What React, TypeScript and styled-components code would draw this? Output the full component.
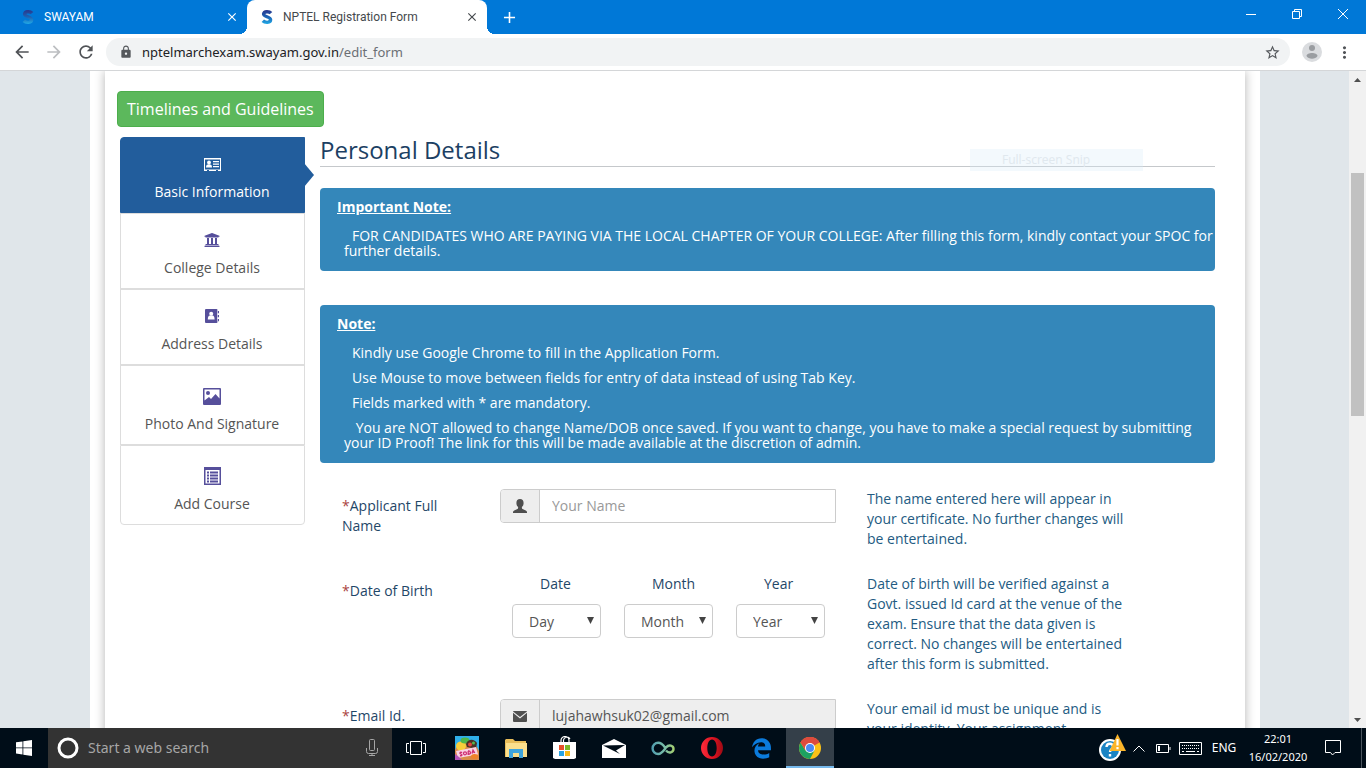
import React from "react";
import styled, { createGlobalStyle } from "styled-components";
import {
  MdArrowBack,
  MdArrowForward,
  MdRefresh,
  MdLock,
  MdStarBorder,
  MdMoreVert,
  MdClose,
  MdAdd,
} from "react-icons/md";
import { FaUniversity, FaEdgeLegacy } from "react-icons/fa";

const GlobalStyle = createGlobalStyle`
  * { box-sizing: border-box; }
  body {
    margin: 0;
    font-family: "Open Sans", "Noto Sans", sans-serif;
    font-size: 14px;
    line-height: 20px;
    color: #1f4768;
  }
  button, input, select { font: inherit; }
  button { border: 0; padding: 0; background: none; cursor: pointer; }
  svg { display: block; flex: none; }
`;

const Desktop = styled.div`
  display: flex;
  flex-direction: column;
  height: 100vh;
  overflow: hidden;
`;

/* ---------- browser ---------- */

const TabStrip = styled.div`
  display: flex;
  flex: none;
  height: 34px;
  background: #0078d7;
  color: #fff;
`;

const Tab = styled.div<{ $active?: boolean }>`
  position: relative;
  display: flex;
  align-items: center;
  gap: 8px;
  width: ${(p) => (p.$active ? 240 : 247)}px;
  padding: 0 8px 0 ${(p) => (p.$active ? 12 : 20)}px;
  background: ${(p) => (p.$active ? "#fff" : "transparent")};
  color: ${(p) => (p.$active ? "#45494d" : "#fff")};
  border-radius: 8px 8px 0 0;
  font-family: Roboto, sans-serif;
  font-size: 12px;

  &::before,
  &::after {
    content: ${(p) => (p.$active ? '""' : "none")};
    position: absolute;
    bottom: 0;
    width: 8px;
    height: 8px;
  }
  &::before {
    right: 100%;
    background: radial-gradient(circle at 0 0, #0078d7 8px, #fff 8px);
  }
  &::after {
    left: 100%;
    background: radial-gradient(circle at 100% 0, #0078d7 8px, #fff 8px);
  }
`;

const TabTitle = styled.span`
  flex: 1;
  white-space: nowrap;
`;

const TabButton = styled.button`
  display: grid;
  place-items: center;
  width: 14px;
  color: inherit;
`;

const NewTab = styled.button`
  display: grid;
  place-items: center;
  width: 44px;
  color: #fff;
`;

const WindowControls = styled.div`
  display: flex;
  height: 28px;
  margin-left: auto;
`;

const WindowButton = styled.button`
  display: grid;
  place-items: center;
  width: 46px;
  color: #fff;
`;

const Toolbar = styled.div`
  display: flex;
  flex: none;
  align-items: center;
  height: 37px;
  padding: 0 6px;
  background: #fff;
  border-bottom: 1px solid #d4d6d8;
  color: #55585c;
`;

const ToolButton = styled.button<{ $dim?: boolean }>`
  display: grid;
  place-items: center;
  width: 32px;
  height: 28px;
  color: ${(p) => (p.$dim ? "#bcbec1" : "#505357")};
`;

const AddressBar = styled.div`
  display: flex;
  flex: 1;
  align-items: center;
  height: 28px;
  margin: 0 12px 0 4px;
  padding: 0 9px 0 13px;
  gap: 9px;
  border-radius: 14px;
  background: #f1f3f4;
`;

const Url = styled.div`
  flex: 1;
  font-family: "Noto Sans", sans-serif;
  font-size: 13px;
  color: #202124;

  span {
    color: #6b6f74;
  }
`;

const Avatar = styled.button`
  margin-right: 6px;
`;

/* ---------- page ---------- */

const Viewport = styled.div`
  display: flex;
  flex: 1;
  min-height: 0;
  background: #e0e6ea;
`;

const Scroller = styled.div`
  flex: 1;
  min-width: 0;
  padding-left: 1px;
  overflow: hidden;
`;

const Container = styled.div`
  max-width: 1170px;
  margin: 0 auto;
  padding: 0 15px;
  background: #fff;
  overflow: hidden;
`;

const Sheet = styled.main`
  position: relative;
  padding: 20px 30px 40px 15px;
  background: #fff;
  box-shadow: 0 0 10px rgba(0, 0, 0, 0.3);
`;

const GuidelinesButton = styled.button`
  height: 36px;
  margin: 0 0 10px -3px;
  padding: 0 9px;
  border: 1px solid #4cae4c;
  border-radius: 4px;
  background: #5cb85c;
  color: #fff;
  font-size: 16px;
`;

const Columns = styled.div`
  display: flex;
  align-items: flex-start;
  gap: 15px;
`;

const Steps = styled.nav`
  flex: none;
  width: 185px;
`;

const Step = styled.a<{ $active?: boolean; $tall?: boolean }>`
  position: relative;
  display: flex;
  flex-direction: column;
  align-items: center;
  gap: 9px;
  height: ${(p) => (p.$tall ? 80 : 76)}px;
  padding: 0 1px 10px 0;
  justify-content: flex-end;
  border: 1px solid ${(p) => (p.$active ? "#225d9c" : "#ddd")};
  background: ${(p) => (p.$active ? "#225d9c" : "#fff")};
  color: ${(p) => (p.$active ? "#fff" : "#555")};
  text-decoration: none;

  &:first-child {
    border-radius: 4px 0 0 0;
  }
  &:last-child {
    border-radius: 0 0 4px 4px;
  }
  &::after {
    content: ${(p) => (p.$active ? '""' : "none")};
    position: absolute;
    left: 100%;
    top: 25px;
    border: solid transparent;
    border-width: 12px 0 12px 10px;
    border-left-color: #225d9c;
  }
`;

const StepIcon = styled.span<{ $active?: boolean }>`
  display: grid;
  place-items: center;
  height: 18px;
  color: ${(p) => (p.$active ? "#fff" : "#564f9b")};
`;

const Main = styled.section`
  flex: 1;
  min-width: 0;
`;

const Heading = styled.h1`
  margin: 0 0 21px;
  padding-bottom: 4px;
  border-bottom: 1px solid #c5c8cb;
  color: #1c3f63;
  font-size: 24px;
  line-height: 25px;
  font-weight: 400;
`;

const Note = styled.div`
  margin-bottom: 34px;
  padding: 11px 0 13px 17px;
  border-radius: 4px;
  background: #3487ba;
  color: #fff;
  line-height: 15px;
`;

const NoteTitle = styled.h2`
  margin: 0 0 13px;
  font-size: 14px;
  line-height: 16px;
  font-weight: 700;
  text-decoration: underline;
`;

const NoteLine = styled.p`
  margin: 0 0 10px 7px;
  text-indent: 8px;

  &:last-child {
    margin-bottom: 0;
  }
`;

const Form = styled.form`
  display: flex;
  flex-direction: column;
  gap: 25px;
  margin-top: -8px;
  padding-left: 22px;
`;

const Row = styled.div`
  display: grid;
  grid-template-columns: 158fr 336fr 379fr;
`;

const rowLabel = `
  padding: 7px 50px 0 0;
`;

const Label = styled.label`
  ${rowLabel}
`;

const GroupLabel = styled.span`
  ${rowLabel}
`;

const Star = styled.span`
  color: #a94442;
`;

const Help = styled.p`
  margin: 0;
  padding: 0 88px 0 31px;
  color: #235b82;
`;

const InputGroup = styled.div`
  display: flex;
  height: 34px;
  border: 1px solid #ccc;
  border-radius: 4px 0 0 4px;
  overflow: hidden;
`;

const Addon = styled.span`
  display: grid;
  place-items: center;
  width: 39px;
  border-right: 1px solid #ccc;
  background: #eee;
  color: #4f4f4f;
`;

const TextInput = styled.input`
  flex: 1;
  min-width: 0;
  padding: 0 12px;
  border: 0;
  border-radius: 0;
  background: #fff;
  color: #555;

  &::placeholder {
    color: #999;
    opacity: 1;
  }
  &:read-only {
    background: #eee;
  }
`;

const DateFields = styled.div`
  display: grid;
  grid-template-columns: repeat(3, 1fr);
`;

const DateField = styled.div`
  display: flex;
  flex-direction: column;
  gap: 10px;
  padding: 0 11px 0 12px;

  label {
    padding-left: 28px;
  }
`;

const SelectBox = styled.div`
  display: grid;
  align-items: center;

  > * {
    grid-area: 1 / 1;
  }
  svg {
    justify-self: end;
    margin: 0 7px 2px 0;
    pointer-events: none;
  }
`;

const Select = styled.select`
  width: 100%;
  height: 34px;
  padding: 1px 0 0 16px;
  border: 1px solid #ccc;
  border-radius: 4px;
  background: #fff;
  color: #555;
  appearance: none;
`;

const SnipGhost = styled.div`
  position: absolute;
  top: 78px;
  right: 102px;
  width: 173px;
  height: 22px;
  padding-left: 32px;
  background: rgba(214, 236, 250, 0.3);
  color: #e0e8ee;
  font-size: 12px;
  line-height: 22px;
`;

const ScrollBar = styled.div`
  display: flex;
  flex: none;
  flex-direction: column;
  align-items: center;
  width: 17px;
  background: #f1f1f1;
  color: #505050;
`;

const ScrollArrow = styled.button`
  display: grid;
  place-items: center;
  width: 17px;
  height: 17px;
`;

const ScrollSpace = styled.div<{ $grow: number }>`
  flex: ${(p) => p.$grow} 0 0;
`;

const ScrollThumb = styled(ScrollSpace)`
  width: 13px;
  background: #c1c1c1;
`;

/* ---------- taskbar ---------- */

const TaskBar = styled.footer`
  display: flex;
  flex: none;
  height: 40px;
  background: #000d18;
  color: #fff;
  font-family: "Noto Sans", sans-serif;
`;

const TaskButton = styled.button<{ $active?: boolean }>`
  display: grid;
  place-items: center;
  width: 48px;
  color: #fff;
  background: ${(p) => (p.$active ? "#343f49" : "transparent")};
  box-shadow: ${(p) => (p.$active ? "inset 0 -2px #76b9ed" : "none")};
`;

const Search = styled.label`
  display: flex;
  align-items: center;
  gap: 9px;
  width: 344px;
  padding: 0 14px 0 9px;
  background: #333;

  input {
    flex: 1;
    min-width: 0;
    padding: 0;
    border: 0;
    background: none;
    color: #fff;
    font-size: 14px;
  }
  input::placeholder {
    color: #a6a6a6;
    opacity: 1;
  }
`;

const Apps = styled.div`
  display: flex;
  gap: 1px;
  margin-left: 3px;
`;

const Tray = styled.div`
  display: flex;
  align-items: center;
  margin-left: auto;
  font-size: 12px;
`;

const TrayItem = styled.button<{ $width: number }>`
  display: grid;
  place-items: center;
  width: ${(p) => p.$width}px;
  height: 40px;
  color: #fff;
  line-height: 18px;
  text-align: center;
`;

const Clock = styled(TrayItem)`
  font-size: 11px;
`;

const ShowDesktop = styled.button`
  width: 5px;
  height: 40px;
  border-left: 1px solid #4a545d;
`;

/* ---------- drawings ---------- */

const SwayamLogo = ({ id }: { id: string }) => (
  <svg width="16" height="16" viewBox="0 0 16 16" fill="none">
    <defs>
      <linearGradient id={id} x1="0" y1="0" x2="0" y2="16" gradientUnits="userSpaceOnUse">
        <stop offset="0" stopColor="#2b2f86" />
        <stop offset="0.5" stopColor="#1c63b4" />
        <stop offset="1" stopColor="#22b4ee" />
      </linearGradient>
    </defs>
    <path
      d="M12 4.200C10.500 2.400 5 1.800 4.600 5c-.3 3 7 2.500 7 5.800 0 3.200-5.600 3.200-7.800 1"
      stroke={`url(#${id})`}
      strokeWidth="3.400"
    />
  </svg>
);

const IdCard = () => (
  <svg width="17" height="13" viewBox="0 0 17 13" fill="currentColor">
    <path fillRule="evenodd" d="M0 0h17v13h-3v-1h-2v1H5v-1H3v1H0zM1 1.500v10h15v-10z" />
    <circle cx="5" cy="4.500" r="1.900" />
    <path d="M2 9.500c0-2 .8-3.200 3-3.200s3 1.200 3 3.200z" />
    <path d="M9 3h6v1.200H9zM9 5.500h6v1.200H9zM9 8h6v1.200H9z" />
  </svg>
);

const AddressBook = () => (
  <svg width="14" height="14" viewBox="0 0 14 14">
    <path fill="currentColor" d="M1 0h10.500a1 1 0 0 1 1 1v12a1 1 0 0 1-1 1H1a1 1 0 0 1-1-1V1a1 1 0 0 1 1-1z" />
    <path fill="currentColor" d="M12 2h2v2.200h-2zM12 6h2v2.200h-2zM12 10h2v2.200h-2z" />
    <path fill="#fff" d="M12.200 1.500h.6v11h-.6z" />
    <circle cx="6.200" cy="4.800" r="2" fill="#fff" />
    <path fill="#fff" d="M2.800 10.500c0-2.600.9-3.800 2-3.900h2.800c1.100.1 2 1.300 2 3.900z" />
  </svg>
);

const Picture = () => (
  <svg width="18" height="17" viewBox="0 0 18 17">
    <path
      fill="currentColor"
      fillRule="evenodd"
      d="M1 0h16a1 1 0 0 1 1 1v15a1 1 0 0 1-1 1H1a1 1 0 0 1-1-1V1a1 1 0 0 1 1-1zM1.500 1.500v11L6 9l2 2 4.500-5 4 4.500v-9z"
    />
    <circle cx="5" cy="5" r="2" fill="currentColor" />
  </svg>
);

const ListIcon = () => (
  <svg width="17" height="18" viewBox="0 0 17 18" fill="currentColor">
    <path fillRule="evenodd" d="M0 0h17v18H0zM1.500 3v13.500h14V3z" />
    <path d="M3 4.500h2v2H3zM6 4.500h8v2H6zM3 7.500h2v2H3zM6 7.500h8v2H6zM3 10.500h2v2H3zM6 10.500h8v2H6zM3 13.500h2v2H3zM6 13.500h8v2H6z" />
  </svg>
);

const UserIcon = () => (
  <svg width="14" height="14" viewBox="0 0 14 14" fill="currentColor">
    <path d="M7 0c2.300 0 3.600 1.600 3.600 3.900 0 1.800-.7 3.200-1.700 4v1.200c0 .6.500.9 1.200 1.200l2.700 1.200c.8.4 1.200.9 1.200 1.600V14H0v-.9c0-.7.4-1.200 1.200-1.600l2.700-1.200c.7-.3 1.200-.6 1.200-1.200V7.900c-1-.8-1.700-2.200-1.700-4C3.400 1.600 4.700 0 7 0z" />
  </svg>
);

const MailGlyph = () => (
  <svg width="14" height="11" viewBox="0 0 14 11" fill="currentColor">
    <path d="M0 .4Q0 0 .5 0h13q.5 0 .5.400L7 6z" />
    <path d="M0 1.800 7 7.500l7-5.700V10q0 1-1 1H1q-1 0-1-1z" />
  </svg>
);

const DownTriangle = () => (
  <svg width="7" height="7" viewBox="0 0 7 7" fill="#444">
    <path d="M0 0h7L3.500 7z" />
  </svg>
);

const ChromeLogo = () => (
  <svg width="22" height="22" viewBox="0 0 22 22">
    <circle cx="11" cy="11" r="11" fill="#fbc116" />
    <path d="M11 11 1.500 5.500A11 11 0 0 1 20.500 5.500z" fill="#dd4b3e" />
    <path d="M1.500 5.500A11 11 0 0 0 11 22l4.500-8.500L11 11 6.500 13.500z" fill="#1da261" />
    <path d="M11 6h9.800A11 11 0 0 0 1.500 5.500l5 8z" fill="#dd4b3e" />
    <circle cx="11" cy="11" r="5" fill="#fff" />
    <circle cx="11" cy="11" r="4" fill="#4a8af4" />
  </svg>
);

const CandyGame = () => (
  <svg width="24" height="24" viewBox="0 0 24 24">
    <path d="M0 0h24v24H0z" fill="#2fb0ea" />
    <path d="M0 14 3 7l8-3 11 7 2 4v9H0z" fill="#d98a4a" />
    <ellipse cx="6" cy="10" rx="5" ry="4.500" fill="#f8cf3a" />
    <ellipse cx="10" cy="4.500" rx="4.500" ry="3" fill="#4fb84a" />
    <path d="M11 8c2-6 9-5 11-1l-1 6-9-2z" fill="#4a3226" />
    <circle cx="15" cy="8.500" r="2" fill="#e4463c" />
    <circle cx="18.500" cy="7" r="1.500" fill="#57b84d" />
    <path d="m1 15 20-4 2 7.500L3 22z" fill="#fbd3e6" />
    <path d="M0 18v6h7l-3-3z" fill="#b455b8" />
    <ellipse cx="19.500" cy="20.500" rx="3.500" ry="2.500" fill="#f0822a" />
    <g stroke="#cf2f73" strokeWidth="1.300" fill="none">
      <path d="M7.200 16.500c-2.500-.8-3 1-1.300 1.500s1.300 2.200-1 1.600" />
      <circle cx="10" cy="17.300" r="1.500" />
      <path d="M13.200 15v3.300q2.500 0 2.200-1.800T13 15M17 17.500l1-3.500 1.800 3M17.300 16.200l2-.3" />
    </g>
  </svg>
);

const FolderIcon = () => (
  <svg width="22" height="19" viewBox="0 0 22 19">
    <path d="M0 1 1 0h7l2 2h11v16H0z" fill="#e8bd5a" />
    <path d="M1 4h21v14H1z" fill="#fbdf8d" />
    <path d="M4 10h14v9h-4v-5H8v5H4z" fill="#3fa4dc" />
  </svg>
);

const StoreIcon = () => (
  <svg width="24" height="24" viewBox="0 0 24 24">
    <path d="M8 7V4.500a4 4 0 0 1 8 0V7M10.500 7V4a3.500 3.500 0 0 1 6.500-1" fill="none" stroke="#fff" strokeWidth="1.200" />
    <path d="M0 6h23v16l-2 1H2l-2-1z" fill="#fff" />
    <path d="M6 9h5v5H6z" fill="#e8502b" />
    <path d="M12 9h5v5h-5z" fill="#7db928" />
    <path d="M6 15h5v5H6z" fill="#2aa3e0" />
    <path d="M12 15h5v5h-5z" fill="#f9b916" />
  </svg>
);

const MailIcon = () => (
  <svg width="24" height="19" viewBox="0 0 24 19">
    <path d="M0 6 12 0l12 6v13H0z" fill="#fff" />
    <path d="m1 6.500 22-.5-9 5.500 4 3.500z" fill="#000d18" />
  </svg>
);

const InfinityIcon = () => (
  <svg width="24" height="15" viewBox="0 0 24 15" fill="none" strokeWidth="2.400">
    <defs>
      <linearGradient id="loop" x1="0" x2="24" y1="0" y2="0" gradientUnits="userSpaceOnUse">
        <stop offset="0" stopColor="#4d9bb0" />
        <stop offset="0.6" stopColor="#7cc0a8" />
        <stop offset="1" stopColor="#a9cf68" />
      </linearGradient>
    </defs>
    <path
      d="M14 6.500C11.500 3 10 1.800 7.200 1.800a5.600 5.600 0 0 0 0 11.200c3.800 0 5.800-4 7.800-6.500 3-3.500 7.500-1.800 7.500 1.500s-4.500 5-7.500 1.500"
      stroke="url(#loop)"
    />
  </svg>
);

const OperaIcon = () => (
  <svg width="22" height="22" viewBox="0 0 22 22">
    <defs>
      <linearGradient id="opera" x1="0" x2="22" y1="0" y2="0" gradientUnits="userSpaceOnUse">
        <stop offset="0" stopColor="#ff2b3b" />
        <stop offset="0.6" stopColor="#d8121f" />
        <stop offset="1" stopColor="#9c0a14" />
      </linearGradient>
    </defs>
    <path
      fill="url(#opera)"
      fillRule="evenodd"
      d="M11 0a11 11 0 1 1 0 22 11 11 0 0 1 0-22zm0 2.500c-3 0-4.700 4-4.700 8.500s1.700 8.500 4.700 8.500 4.700-4 4.700-8.500S14 2.500 11 2.500z"
    />
  </svg>
);

const HelpAlert = () => (
  <svg width="29" height="28" viewBox="0 0 29 28">
    <circle cx="12" cy="16" r="11" fill="#fff" />
    <circle cx="12" cy="16" r="9" fill="#1b84c4" />
    <path d="M8.500 13c.3-4.500 7-4 6.500 0-.3 2.300-3 2.300-3 5M12 20v2.500" stroke="#fff" strokeWidth="2.400" fill="none" />
    <path d="M19.500 0 28 17H11.500z" fill="#fbb52a" />
    <path d="M19.500 5v6.500M19.500 13v2.200" stroke="#fff" strokeWidth="2.200" />
  </svg>
);

const KeyboardIcon = () => (
  <svg width="23" height="13" viewBox="0 0 23 13" fill="none" stroke="#fff">
    <path d="M.5.5h22v12H.5z" />
    <path d="M3 3.500h17M3 6.500h17" strokeDasharray="1 1" />
    <path d="M3 9.500h2M7 9.500h9M18 9.500h2" />
  </svg>
);

const steps = [
  { label: "Basic Information", icon: <IdCard />, active: true },
  { label: "College Details", icon: <FaUniversity size={16} /> },
  { label: "Address Details", icon: <AddressBook /> },
  { label: "Photo And Signature", icon: <Picture />, tall: true },
  { label: "Add Course", icon: <ListIcon />, tall: true },
];

const dateParts = [
  { caption: "Date", value: "Day" },
  { caption: "Month", value: "Month" },
  { caption: "Year", value: "Year" },
];

const apps = [
  { name: "Candy Crush Soda", icon: <CandyGame /> },
  { name: "File Explorer", icon: <FolderIcon /> },
  { name: "Store", icon: <StoreIcon /> },
  { name: "Mail", icon: <MailIcon /> },
  { name: "Infinity", icon: <InfinityIcon /> },
  { name: "Opera", icon: <OperaIcon /> },
  { name: "Edge", icon: <FaEdgeLegacy size={21} color="#0b7bdc" /> },
  { name: "Chrome", icon: <ChromeLogo />, active: true },
];

function Browser() {
  return (
    <>
      <TabStrip>
        <Tab>
          <SwayamLogo id="logo-a" />
          <TabTitle>SWAYAM</TabTitle>
          <TabButton aria-label="Close tab"><MdClose size={14} /></TabButton>
        </Tab>
        <Tab $active>
          <SwayamLogo id="logo-b" />
          <TabTitle>NPTEL Registration Form</TabTitle>
          <TabButton aria-label="Close tab"><MdClose size={14} /></TabButton>
        </Tab>
        <NewTab aria-label="New tab"><MdAdd size={19} /></NewTab>
        <WindowControls>
          <WindowButton aria-label="Minimize">
            <svg width="10" height="10" stroke="currentColor"><path d="M0 5.500h10" /></svg>
          </WindowButton>
          <WindowButton aria-label="Restore">
            <svg width="10" height="10" fill="none" stroke="currentColor">
              <path d="M.5 2.500h7v7h-7zM2.500 2.500v-2h7v7h-2" />
            </svg>
          </WindowButton>
          <WindowButton aria-label="Close">
            <svg width="10" height="10" stroke="currentColor"><path d="m0 0 10 10M10 0 0 10" /></svg>
          </WindowButton>
        </WindowControls>
      </TabStrip>
      <Toolbar>
        <ToolButton aria-label="Back"><MdArrowBack size={20} /></ToolButton>
        <ToolButton aria-label="Forward" $dim><MdArrowForward size={20} /></ToolButton>
        <ToolButton aria-label="Reload"><MdRefresh size={20} /></ToolButton>
        <AddressBar>
          <MdLock size={14} />
          <Url>nptelmarchexam.swayam.gov.in<span>/edit_form</span></Url>
          <MdStarBorder size={17} />
        </AddressBar>
        <Avatar aria-label="Profile">
          <svg width="20" height="20" viewBox="0 0 20 20">
            <circle cx="10" cy="10" r="10" fill="#dadcdf" />
            <circle cx="10" cy="6" r="3" fill="#9a9da1" />
            <path d="M4.500 14c0-4 11-4 11 0-2 3.500-9 3.500-11 0z" fill="#9a9da1" />
          </svg>
        </Avatar>
        <ToolButton aria-label="Menu"><MdMoreVert size={19} /></ToolButton>
      </Toolbar>
    </>
  );
}

function RegistrationForm() {
  return (
    <Form>
      <Row>
        <Label htmlFor="full-name"><Star>*</Star>Applicant Full Name</Label>
        <InputGroup>
          <Addon><UserIcon /></Addon>
          <TextInput id="full-name" placeholder="Your Name" />
        </InputGroup>
        <Help>The name entered here will appear in your certificate. No further changes will be entertained.</Help>
      </Row>
      <Row role="group" aria-labelledby="dob">
        <GroupLabel id="dob"><Star>*</Star>Date of Birth</GroupLabel>
        <DateFields>
          {dateParts.map((part) => (
            <DateField key={part.caption}>
              <label htmlFor={`dob-${part.caption}`}>{part.caption}</label>
              <SelectBox>
                <Select id={`dob-${part.caption}`}>
                  <option>{part.value}</option>
                </Select>
                <DownTriangle />
              </SelectBox>
            </DateField>
          ))}
        </DateFields>
        <Help>
          Date of birth will be verified against a Govt. issued Id card at the venue of the exam. Ensure that the
          data given is correct. No changes will be entertained after this form is submitted.
        </Help>
      </Row>
      <Row>
        <Label htmlFor="email"><Star>*</Star>Email Id.</Label>
        <InputGroup>
          <Addon><MailGlyph /></Addon>
          <TextInput id="email" type="email" readOnly value="lujahawhsuk02@gmail.com" />
        </InputGroup>
        <Help>Your email id must be unique and is your identity. Your assignment</Help>
      </Row>
    </Form>
  );
}

function Page() {
  return (
    <Viewport>
      <Scroller>
        <Container>
          <Sheet>
            <GuidelinesButton>Timelines and Guidelines</GuidelinesButton>
            <Columns>
              <Steps>
                {steps.map((s) => (
                  <Step key={s.label} href="#" $active={s.active} $tall={s.tall}>
                    <StepIcon $active={s.active}>{s.icon}</StepIcon>
                    {s.label}
                  </Step>
                ))}
              </Steps>
              <Main>
                <Heading>Personal Details</Heading>
                <Note>
                  <NoteTitle>Important Note:</NoteTitle>
                  <NoteLine>
                    FOR CANDIDATES WHO ARE PAYING VIA THE LOCAL CHAPTER OF YOUR COLLEGE: After filling this form,
                    kindly contact your SPOC for further details.
                  </NoteLine>
                </Note>
                <Note>
                  <NoteTitle>Note:</NoteTitle>
                  <NoteLine>Kindly use Google Chrome to fill in the Application Form.</NoteLine>
                  <NoteLine>Use Mouse to move between fields for entry of data instead of using Tab Key.</NoteLine>
                  <NoteLine>Fields marked with * are mandatory.</NoteLine>
                  <NoteLine>
                    &nbsp;You are NOT allowed to change Name/DOB once saved. If you want to change, you have to make
                    a special request by submitting your ID Proof! The link for this will be made available at the
                    discretion of admin.
                  </NoteLine>
                </Note>
                <RegistrationForm />
              </Main>
            </Columns>
            <SnipGhost>Full-screen Snip</SnipGhost>
          </Sheet>
        </Container>
      </Scroller>
      <ScrollBar>
        <ScrollArrow aria-label="Scroll up">
          <svg width="7" height="4" fill="#505050"><path d="M0 4h7L3.500 0z" /></svg>
        </ScrollArrow>
        <ScrollSpace $grow={85} />
        <ScrollThumb $grow={243} />
        <ScrollSpace $grow={295} />
        <ScrollArrow aria-label="Scroll down">
          <svg width="7" height="4" fill="#505050"><path d="M0 0h7L3.500 4z" /></svg>
        </ScrollArrow>
      </ScrollBar>
    </Viewport>
  );
}

function WindowsTaskBar() {
  return (
    <TaskBar>
      <TaskButton aria-label="Start">
        <svg width="16" height="16" viewBox="0 0 16 16" fill="#fff">
          <path d="m0 2.300 6.500-.9v6.100H0zM7.300 1.200 16 0v7.500H7.300zM0 8.300h6.500v6.200L0 13.600zM7.300 8.300H16V16l-8.700-1.300z" />
        </svg>
      </TaskButton>
      <Search>
        <svg width="22" height="22" viewBox="0 0 22 22" fill="none">
          <circle cx="11" cy="11" r="9" stroke="#fff" strokeWidth="3" />
        </svg>
        <input aria-label="Search" placeholder="Start a web search" />
        <svg width="12" height="18" viewBox="0 0 12 18" fill="none" stroke="#a6a6a6">
          <path d="M3.500 1.500q0-1 1-1h3q1 0 1 1v9q0 1-1 1h-3q-1 0-1-1zM.5 9v3.500q0 2 2 2h7q2 0 2-2V9M6 14.500v2M3 16.500h6" />
        </svg>
      </Search>
      <TaskButton aria-label="Task view">
        <svg width="20" height="14" viewBox="0 0 20 14" fill="none" stroke="#fff">
          <path d="M4.500.5h11v13h-11zM3 2.500H.5v9H3M17 2.500h2.500v9H17" />
        </svg>
      </TaskButton>
      <Apps>
        {apps.map((app) => (
          <TaskButton key={app.name} aria-label={app.name} $active={app.active}>
            {app.icon}
          </TaskButton>
        ))}
      </Apps>
      <Tray>
        <TrayItem $width={30} aria-label="Help"><HelpAlert /></TrayItem>
        <TrayItem $width={24} aria-label="Show hidden icons">
          <svg width="12" height="7" fill="none" stroke="#fff"><path d="m.5 6.500 5.500-5.500 5.500 5.500" /></svg>
        </TrayItem>
        <TrayItem $width={24} aria-label="Battery">
          <svg width="15" height="9" fill="none" stroke="#fff">
            <path d="M.5.5h12v8H.5zM14 3v3" />
            <path d="M2 2h2v5H2z" fill="#fff" stroke="none" />
          </svg>
        </TrayItem>
        <TrayItem $width={30} aria-label="Keyboard"><KeyboardIcon /></TrayItem>
        <TrayItem $width={38}>ENG</TrayItem>
        <Clock $width={70}><span>22:01<br />16/02/2020</span></Clock>
        <TrayItem $width={40} aria-label="Notifications">
          <svg width="16" height="16" fill="none" stroke="#fff">
            <path d="M.5.5h15v12H10l-2.500 2.500-2-2.500h-5z" />
          </svg>
        </TrayItem>
        <TrayItem $width={8} aria-hidden="true" tabIndex={-1} />
        <ShowDesktop aria-label="Show desktop" />
      </Tray>
    </TaskBar>
  );
}
export default function App() {
  return (
    <Desktop>
      <GlobalStyle />
      <Browser />
      <Page />
      <WindowsTaskBar />
    </Desktop>
  );
}
